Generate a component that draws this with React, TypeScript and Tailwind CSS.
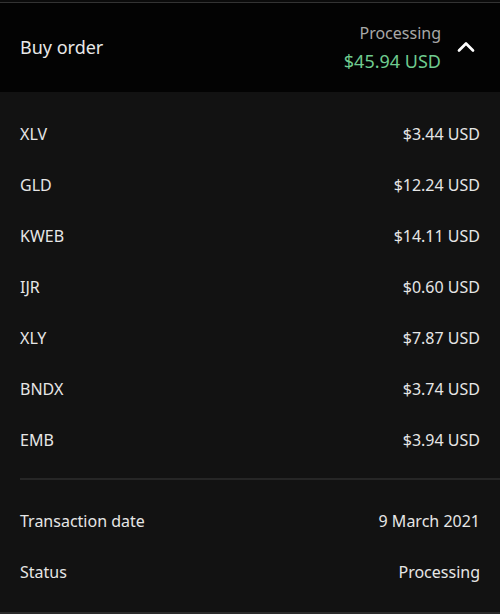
import { ChevronUp } from 'lucide-react';

const holdings = [
    { symbol: 'XLV', amount: '$3.44 USD' },
    { symbol: 'GLD', amount: '$12.24 USD' },
    { symbol: 'KWEB', amount: '$14.11 USD' },
    { symbol: 'IJR', amount: '$0.60 USD' },
    { symbol: 'XLY', amount: '$7.87 USD' },
    { symbol: 'BNDX', amount: '$3.74 USD' },
    { symbol: 'EMB', amount: '$3.94 USD' },
];

export default function App() {
    return (
        <div
            className="w-[500px] h-[614px] bg-[#121212] text-[#e6e6e6] flex flex-col overflow-hidden"
            style={{ fontFamily: '"Noto Sans", "Open Sans", sans-serif' }}
        >
            {/* header */}
            <div className="h-[2px] bg-[#0b0b0b]" />
            <div className="border-t border-[#333] bg-[#030303] h-[90px] flex items-center justify-between pl-5 pr-5">
                <span className="text-[18px] text-[#e8e8e8]">Buy order</span>
                <div className="flex items-center gap-[11px]">
                    <div className="flex flex-col items-end leading-[28px] -mt-[1px]">
                        <span className="text-[16px] text-[#a8a8a8]">Processing</span>
                        <span className="text-[18px] text-[#6fcb8f]">$45.94 USD</span>
                    </div>
                    <ChevronUp size={28} strokeWidth={2.3} className="text-white -mt-[2px]" />
                </div>
            </div>

            {/* holdings */}
            <div className="flex flex-col pt-[16px] pb-[13px]">
                {holdings.map((h) => (
                    <div key={h.symbol} className="h-[51px] flex items-center justify-between px-5 text-[16px]">
                        <span>{h.symbol}</span>
                        <span>{h.amount}</span>
                    </div>
                ))}
            </div>

            <div className="ml-5 h-[2px] bg-[#262626]" />

            {/* details */}
            <div className="flex flex-col pt-[15px]">
                <div className="h-[51px] flex items-center justify-between px-5 text-[16px]">
                    <span>Transaction date</span>
                    <span>9 March 2021</span>
                </div>
                <div className="h-[51px] flex items-center justify-between px-5 text-[16px]">
                    <span>Status</span>
                    <span>Processing</span>
                </div>
            </div>
            <div className="mt-auto h-[2px] bg-[#2a2a2a]" />
        </div>
    );
}
